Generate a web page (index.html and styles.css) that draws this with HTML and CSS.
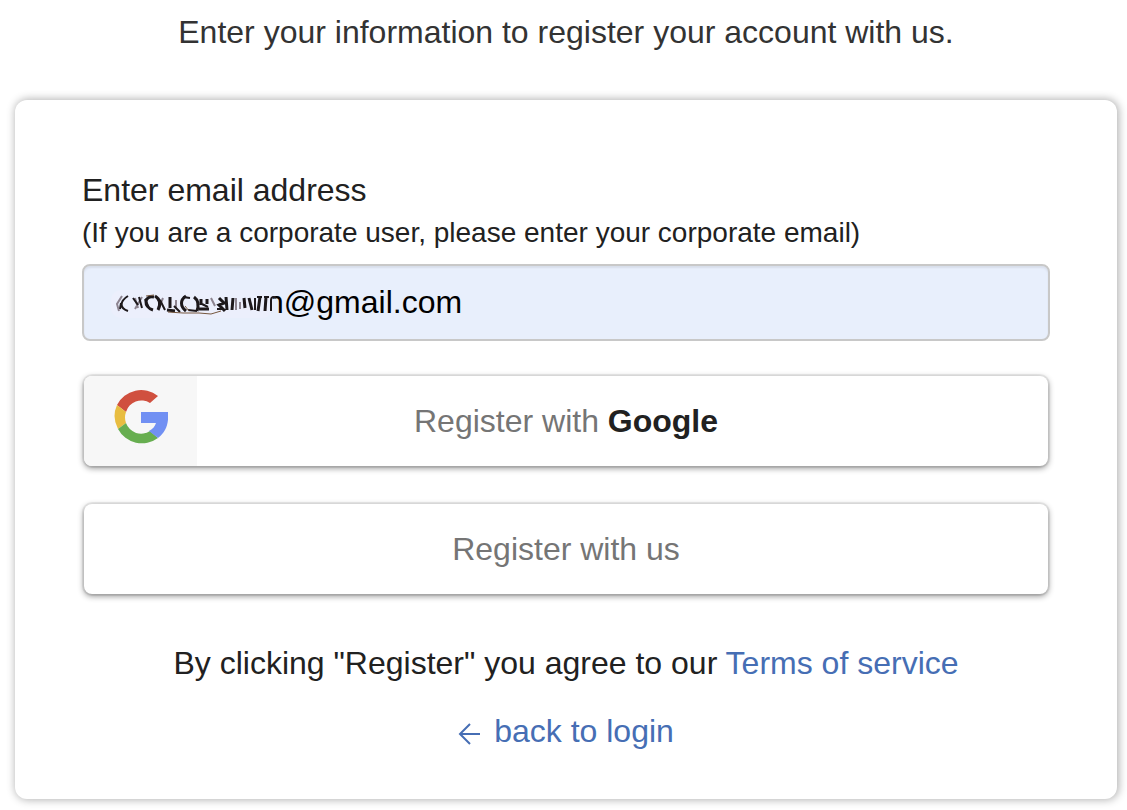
FILE: index.html
```html
<!DOCTYPE html>
<html lang="en">
<head>
<meta charset="utf-8">
<meta name="viewport" content="width=device-width, initial-scale=1">
<title>Register</title>
<link rel="stylesheet" href="styles.css">
</head>
<body>
<main class="page">
  <p class="intro">Enter your information to register your account with us.</p>
  <form class="card">
    <label class="label" for="email">Enter email address
      <span class="hint">(If you are a corporate user, please enter your corporate email)</span>
    </label>
    <div class="field">
      <input class="input" id="email" type="email" value="n@gmail.com">
      <svg class="scribble" viewBox="0 0 176 36" fill="none" stroke="#1d181b" aria-hidden="true">
        <rect class="haze" x="5" y="4" width="162" height="28" rx="10"/>
        <path stroke="#8d8490" stroke-width="2" d="M16 10l-5 8 2 7M29 12l3 10M36 11l-7 12M57 12l-3 7M70 14v8M105 12l4 8M130 12v12M134 16v7"/>
        <path stroke-width="2" d="M22 10c-8 5-9 12 0 15M15 17l-1 6M27 12l5 7M33 11l3 11"/>
        <path stroke-width="3" d="M48 11c-10-2-11 10-1 13M49 10c5 3 6 8 3 14M64 11v11M61 24l8 1M80 10c-6 4-6 10 0 15M88 11c4 3 5 8 3 14M95 13v6M93 23h10M101 13v5"/>
        <path stroke-width="2" d="M39 13l4 9M54 14l5 10M68 20l6 6M77 11l7 1M82 24l9 1M96 18l6 3"/>
        <path stroke-width="3" d="M113 12l5 5-5 2 6 6M120 11l1 13M127 12l-1 12M138 12l1 10M143 12l3 12M154 11l-2 14M160 11l-1 14"/>
        <path stroke-width="2" d="M111 23h5M149 12v12M151 11h5M158 11h5M165 25V14c0-3 2-4 5-2"/>
        <path stroke="#76573f" stroke-width="1" d="M62 26l15 1h16l12 1 10-3M40 10l8-1M79 20l4 5"/>
      </svg>
    </div>
    <button class="button" type="button">
      <span class="logo">
        <svg class="google" viewBox="0 0 54 54" aria-hidden="true">
          <path fill="#d0503f" d="M3 15A27 27 0 0 1 44 6l-8 7A16 16 0 0 0 12 22z"/>
          <path fill="#e8bd41" d="M3 15l9 7a16 16 0 0 0 0 11l-8 6A27 27 0 0 1 3 15z"/>
          <path fill="#67ae50" d="M4 39l8-6a16 16 0 0 0 24 8l8 7A27 27 0 0 1 4 39z"/>
          <path fill="#7190f3" d="M27 22h27c1 11-2 20-10 26l-9-7c4-2 6-5 7-8H27z"/>
        </svg>
      </span>
      <span class="caption">Register with <b class="brand">Google</b></span>
    </button>
    <button class="button" type="submit"><span class="caption">Register with us</span></button>
    <p class="terms">By clicking "Register" you agree to our <a class="link" href="#terms">Terms of service</a></p>
    <a class="link back" href="#login">
      <svg class="arrow" viewBox="0 0 22 22" fill="none" stroke="currentColor" stroke-width="2" aria-hidden="true"><path d="M22 11H2M12 1L2 11l10 10"/></svg>
      back to login
    </a>
  </form>
</main>
</body>
</html>
```
FILE: styles.css
```css
* { box-sizing: border-box; }
body {
  margin: 0;
  background: #fff;
  color: #212121;
  font: 32px/44px "Liberation Sans", Arial, sans-serif;
}
.page { padding: 10px 10px 11px 15px; }
.intro { margin: 0 0 46px; text-align: center; color: #333; }
.card {
  display: flex;
  flex-direction: column;
  padding: 68px 67px 46px;
  border-radius: 12px;
  background: #fff;
  box-shadow: 1px 0 8px 1px rgba(0, 0, 0, .3);
}
.label { display: block; }
.hint { display: block; font-size: 28px; line-height: 42px; }
.field { position: relative; margin: 10px 0 35px; }
.input {
  display: block;
  width: 100%;
  height: 77px;
  padding: 0 24px 0 182px;
  border: 2px solid #c8c8c8;
  border-radius: 8px;
  background: #e8effc;
  box-shadow: inset 0 2px 2px rgba(0, 0, 0, .07);
  color: #000;
  font: inherit;
}
.scribble { position: absolute; left: 24px; top: 22px; width: 176px; height: 36px; }
.haze { fill: #eceffc; stroke: none; }
.button {
  position: relative;
  display: flex;
  align-items: stretch;
  height: 90px;
  margin: 0 2px 38px;
  padding: 0;
  overflow: hidden;
  border: 0;
  border-radius: 8px;
  background: #fff;
  box-shadow: 0 0 0 2px rgba(0, 0, 0, .06), 0 2px 6px rgba(0, 0, 0, .45);
  color: #757575;
  font: inherit;
}
.logo {
  position: absolute;
  inset: 0 auto 0 0;
  width: 113px;
  padding: 14px 30px;
  background: #f7f7f7;
}
.google { display: block; width: 54px; height: 54px; }
.caption { flex: 1; align-self: center; text-align: center; }
.brand { color: #212121; }
.terms { margin: 9px 0 24px; text-align: center; }
.link { color: #466eb4; text-decoration: none; }
.back { display: flex; align-items: center; align-self: center; gap: 14px; }
.arrow { width: 22px; height: 22px; margin-top: 5px; }
```
